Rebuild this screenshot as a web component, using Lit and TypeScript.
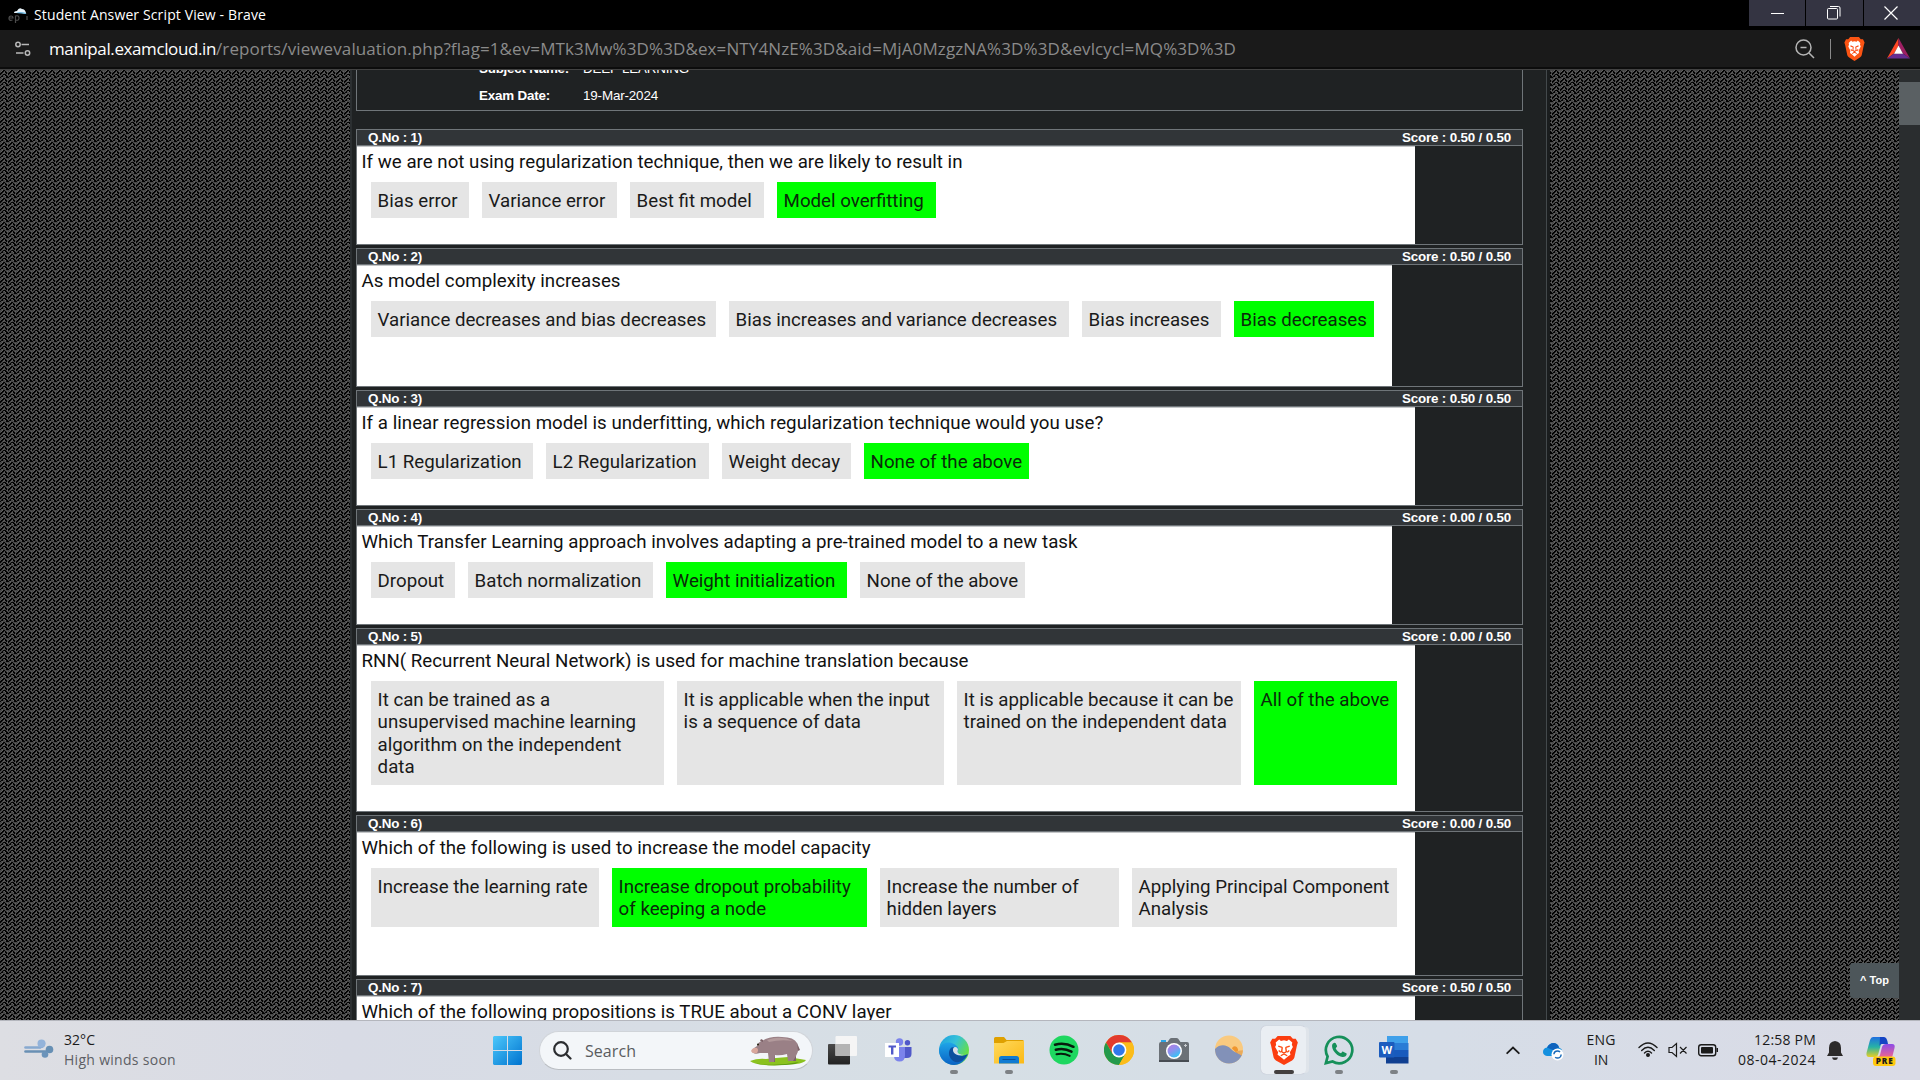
import { LitElement, html, css, svg, nothing } from "lit";
import { customElement, property } from "lit/decorators.js";

// Spreads its letters so that the line takes a given width in pixels.
@customElement("fit-text")
class FitText extends LitElement {
  @property({ type: Number }) w = 0;
  static styles = css`
    :host { display: inline-block; white-space: pre; }
    .t { display: inline-block; }
  `;
  render() { return html`<span class="t"><slot></slot></span>`; }
  firstUpdated() {
    this.fit();
    document.fonts.ready.then(() => this.fit());
  }
  fit() {
    const t = this.renderRoot.querySelector(".t") as HTMLElement;
    t.style.letterSpacing = "0px";
    const n = (this.textContent || "").length;
    const nat = t.getBoundingClientRect().width;
    if (n > 1 && this.w) t.style.letterSpacing = `${(this.w - nat) / n}px`;
  }
}

interface Opt { x: number; r: number; lines: string[]; on?: boolean }
interface Question { n: number; score: string; text: string; tw: number; sheet: number; body: number; opts: Opt[] }

const o = (x: number, r: number, text: string, on = false): Opt => ({ x, r, lines: text.split("|"), on });

const questions: Question[] = [
  { n: 1, score: "0.50", sheet: 1058, body: 98, tw: 601, text: "If we are not using regularization technique, then we are likely to result in",
    opts: [o(371, 469, "Bias error"), o(482, 617, "Variance error"), o(630, 764, "Best fit model"), o(777, 936, "Model overfitting", true)] },
  { n: 2, score: "0.50", sheet: 1035, body: 121, tw: 259, text: "As model complexity increases",
    opts: [o(371, 716, "Variance decreases and bias decreases"), o(729, 1069, "Bias increases and variance decreases"), o(1082, 1221, "Bias increases"), o(1234, 1374, "Bias decreases", true)] },
  { n: 3, score: "0.50", sheet: 1058, body: 98, tw: 741, text: "If a linear regression model is underfitting, which regularization technique would you use?",
    opts: [o(371, 533, "L1 Regularization"), o(546, 709, "L2 Regularization"), o(722, 851, "Weight decay"), o(864, 1029, "None of the above", true)] },
  { n: 4, score: "0.00", sheet: 1035, body: 98, tw: 716, text: "Which Transfer Learning approach involves adapting a pre-trained model to a new task",
    opts: [o(371, 455, "Dropout"), o(468, 653, "Batch normalization"), o(666, 847, "Weight initialization", true), o(860, 1025, "None of the above")] },
  { n: 5, score: "0.00", sheet: 1058, body: 166, tw: 607, text: "RNN( Recurrent Neural Network) is used for machine translation because",
    opts: [o(371, 664, "It can be trained as a|unsupervised machine learning|algorithm on the independent|data"), o(677, 944, "It is applicable when the input|is a sequence of data"), o(957, 1241, "It is applicable because it can be|trained on the independent data"), o(1254, 1397, "All of the above", true)] },
  { n: 6, score: "0.00", sheet: 1058, body: 143, tw: 509, text: "Which of the following is used to increase the model capacity",
    opts: [o(371, 599, "Increase the learning rate"), o(612, 867, "Increase dropout probability|of keeping a node", true), o(880, 1119, "Increase the number of|hidden layers"), o(1132, 1397, "Applying Principal Component|Analysis")] },
  { n: 7, score: "0.50", sheet: 1058, body: 98, tw: 530, text: "Which of the following propositions is TRUE about a CONV layer", opts: [] },
];

// One repeat of the woven page background: g and l are threads, k is the gap.
const weaveRows = ["gglkkggg", "glkkgkgl", "gkkglkkg", "kkglggkg", "kggkkkgl", "ggkglkkg", "gkkgglkk", "kglgggkk"];
const weaveTones: Record<string, string> = { g: "#474747", l: "#606060", k: "#020202" };

const lion = svg`
  <path fill="#fff" d="M13 4.600l2.600.5 1.600-1.200 3 2.600-.4 2 .9 1.800-2.600 4.600.5 2.300-2 1.200-3.600 3-3.600-3-2-1.200.5-2.300-2.600-4.600.9-1.800-.4-2 3-2.600 1.600 1.200z"/>
  <path fill="none" stroke="#fb4a12" stroke-width="1.200" d="M8 9.600l3.400 1.200M18 9.600l-3.400 1.200M11.500 10.500l-.5 4 2 1.200 2-1.200-.5-4M10.200 18l2.800-1.600 2.800 1.600M13 15.600v1.600M8.400 13.400l1.800 1.600M17.600 13.400l-1.800 1.600"/>`;

const icons = {
  edge: svg`<svg width="30" height="30" viewBox="0 0 30 30"><defs>
    <linearGradient id="e1" x1="0" y1="0" x2="1" y2=".6"><stop offset="0" stop-color="#1b9de2"/><stop offset=".5" stop-color="#35c1d8"/><stop offset="1" stop-color="#6be238"/></linearGradient>
    <linearGradient id="e2" x1="0" y1="0" x2="0" y2="1"><stop offset="0" stop-color="#1fa5e8"/><stop offset="1" stop-color="#0a62c4"/></linearGradient></defs>
    <circle cx="15" cy="15" r="15" fill="url(#e1)"/>
    <path fill="url(#e2)" d="M0 15C1 8.500 8 6.500 12.500 8c5.500 1.500 7.500 5 6.500 8-1 2.600 1 5 4.500 5 2 0 4-.8 5-1.400C26.500 26 21 30 15 30 6.700 30 0 23.300 0 15z"/>
    <path fill="#0d4f9e" d="M11.500 13.500c-3 4-1.500 10 3.500 13 4 2.200 9 0 13.500-6.500.5-.8-.2-1-.8-.6-3.700 2-8.700 1.800-11.700-.9-2-1.800-2.200-4.200-1-6-1.500-.6-2.700-.1-3.500 1z"/>
    <path fill="#d7dfe7" d="M19 14.500c-1.400-4-5.500-2.800-5 1 .6 4 6 6 11 4.200C20 20 17.500 18 19 14.500z"/></svg>`,
  explorer: svg`<svg width="30" height="30" viewBox="0 0 30 30"><defs><linearGradient id="f1" x1="0" y1="0" x2="1" y2="1"><stop offset="0" stop-color="#ffd95c"/><stop offset="1" stop-color="#fbb915"/></linearGradient></defs>
    <path fill="#dfa000" d="M0 3.500Q0 2 1.500 2H10l2.500 3H28.500Q30 5 30 6.500V12H0z"/><path fill="url(#f1)" d="M0 8H9.500L13 6H30V28.500H0z"/>
    <path fill="#0f7bd2" d="M5 23.500Q5 21 7.500 21H22.500Q25 21 25 23.500V28.500H5z"/><path stroke="#0a4f99" d="M8.500 24.500H21.500"/></svg>`,
  spotify: svg`<svg width="30" height="30" viewBox="0 0 30 30"><circle cx="15" cy="15" r="14.500" fill="#1ed760"/><path fill="none" stroke="#061a0c" stroke-linecap="round" stroke-width="2.500" d="M6 9.700q9.500-2.600 18.500 2.100M6.800 14.700q8.200-2.200 15.700 1.900"/><path fill="none" stroke="#061a0c" stroke-linecap="round" stroke-width="2" d="M7.500 19.200q7-1.600 13.200 1.700"/></svg>`,
  chrome: svg`<svg width="30" height="30" viewBox="0 0 30 30"><circle cx="15" cy="15" r="15" fill="#fbbc1a"/>
    <path fill="#e23a2e" d="M2 7.500A15 15 0 0 1 28 7.500H15L8.500 18.700z"/><path fill="#23994b" d="M2 7.500A15 15 0 0 0 15 30L21.500 18.700H15L8.500 18.700z"/>
    <path fill="#fbbc1a" d="M28 7.500A15 15 0 0 1 15 30L21.500 18.700 15 7.500z"/><circle cx="15" cy="15" r="7.400" fill="#fff"/><circle cx="15" cy="15" r="5.800" fill="#3178ea"/></svg>`,
  camera: svg`<svg width="30" height="30" viewBox="0 0 30 30"><defs><linearGradient id="c1" x1="0" y1="0" x2=".6" y2="1"><stop offset="0" stop-color="#b97be0"/><stop offset=".5" stop-color="#8e90ee"/><stop offset="1" stop-color="#35c3f5"/></linearGradient></defs>
    <path fill="#2aa5e6" d="M2 5h5v4H2z"/><path fill="#6b7177" d="M0 9Q0 7 2 7H8.500L11 3.500Q11.500 3 12.500 3H17.500Q18.500 3 19 3.500L21.500 7H28Q30 7 30 9V25.500Q30 27 28.500 27H1.500Q0 27 0 25.500z"/><path fill="#474c52" d="M0 25H30V27H0z"/>
    <circle cx="15" cy="16" r="8" fill="#fff"/><circle cx="15" cy="16" r="6.500" fill="url(#c1)"/><path fill="none" stroke="#c8ccd0" d="M26.500 9v3M25 10.500h3"/></svg>`,
  hill: svg`<svg width="30" height="30" viewBox="0 0 30 30"><defs><clipPath id="hc"><circle cx="15" cy="14.500" r="14"/></clipPath></defs><g clip-path="url(#hc)"><path fill="#f9ca80" d="M0 0H30V30H0z"/><path fill="#f0962e" d="M18 13.500c1-3 5-3 6 1v5z"/><path fill="#e9ab5c" d="M22 16l8-1v6l-4 0z"/><path fill="#8291b8" d="M0 15C5 9 12 9 17 14c4 4 7 4 13 8V30H0z"/></g></svg>`,
  brave: svg`<svg width="30" height="30" viewBox="0 0 26 26"><path fill="#fb3d10" d="M7.500 .8H18.500L20.700 3.200 23.200 3.200 25 6.400 24.200 9 22 19.500Q21.600 21 20 22L13 26 6 22Q4.400 21 4 19.500L1.800 9 1 6.400 2.800 3.200 5.300 3.200z"/>${lion}</svg>`,
  whatsapp: svg`<svg width="30" height="30" viewBox="0 0 30 30"><path fill="none" stroke="#16905a" stroke-width="2.700" d="M1.900 28.100L3.600 21.500A13.200 13.200 0 1 1 8.600 26.500z"/><path fill="#16905a" d="M10.500 7.800c-1.800.3-2.700 2-2.400 4 .6 4.700 5.400 9.500 10.300 10.200 2 .3 4.200-.8 4.300-3 0-.4-.2-.6-.5-.8l-3-1.500c-.4-.2-.8-.1-1.100.2l-1.100 1.400c-2.500-.9-4.300-2.700-5.300-5.100l1.200-1.500c.2-.3.3-.6.1-1L11.700 8.300c-.2-.4-.6-.6-1.200-.5z"/></svg>`,
  word: svg`<svg width="30" height="30" viewBox="0 0 30 30"><path fill="#3fa0ea" d="M8 1H29V8H8z"/><path fill="#2a7cd6" d="M7 8H29.500V15H7z"/><path fill="#185abd" d="M7 15H29.500V22H7z"/><path fill="#103f91" d="M7 22H29.500V28.500H7z"/><rect y="7" width="15.500" height="15.500" rx="1" fill="#1b5cbe"/><text x="7.700" y="18.800" font-size="11" font-weight="700" text-anchor="middle" fill="#fff">W</text></svg>`,
};

const apps: Array<[keyof typeof icons, number]> = [
  ["edge", 1], ["explorer", 1], ["spotify", 0], ["chrome", 0], ["camera", 0], ["hill", 0], ["brave", 2], ["whatsapp", 1], ["word", 1],
];

@customElement("app-root")
class AppRoot extends LitElement {
  static styles = css`
    :host { display: block; width: 1920px; height: 1080px; overflow: hidden; background: #000; --ui: "Open Sans", "Noto Sans", sans-serif; }
    * { box-sizing: border-box; }
    svg { display: block; flex: none; }
    .screen { display: grid; grid-template-rows: 30px 40px 950px 60px; width: 1920px; height: 1080px; font-family: var(--ui); }
    .title { display: flex; align-items: flex-start; background: #000; color: #fff; font-size: 14px; line-height: 29px; }
    .fav { margin: 7px 6px 0 8px; }
    .grow { flex: 1; }
    .btns { display: flex; gap: 1px; }
    .btn { width: 57px; height: 26px; background: #343442; display: flex; align-items: center; justify-content: center; }
    .btn:first-child { width: 56px; padding-left: 2px; }
    .btn:last-child { width: 56px; padding-right: 2px; }
    .btn:nth-child(2) { padding-right: 2px; }
    .url { display: flex; height: 40px; background: #1a1a1a; border-bottom: 1px solid #424242; box-shadow: inset 0 -2px 0 #0c0c0c; align-items: center; font-size: 17px; color: #8b8b8b; padding: 0 10px 2px 15px; }
    .url .tune { margin-right: 18px; }
    .url b { font-weight: 400; color: #fff; }
    .sep { width: 1px; height: 20px; background: #8a8a8a; margin: 0 13px 0 15px; }
    .bat { margin-left: 22px; }
    .page { position: relative; display: flex; height: 950px; overflow: hidden; background: #1f2223; }
    .weave { height: 950px; }
    .wrap { width: 1200px; border-left: 2px solid #2b2f31; border-right: 3px solid #1a1d1e; padding: 0 24px 0 4px; font-family: "Liberation Sans", Arial, sans-serif; font-weight: 700; font-size: 13.400px; color: #fff; box-shadow: inset -1px 0 0 #43494c; }
    .info { height: 41px; border: 1px solid #6f7579; border-top: 0; margin-bottom: 18px; padding-left: 122px; overflow: hidden; }
    .row { display: grid; grid-template-columns: 104px 1fr; line-height: 27px; height: 27px; }
    .row:first-child { margin-top: -15px; }
    .row span:last-child { font-weight: 400; }
    .q { border: 1px solid #6f7579; margin-bottom: 3px; }
    .qh { display: flex; justify-content: space-between; height: 16px; line-height: 15px; background: #313538; border-bottom: 1px solid #6f7579; padding: 0 11px; }
    .sheet { background: #fff; font-family: Roboto, sans-serif; font-weight: 400; font-size: 18.700px; color: #111; overflow: hidden; border-top: 1px solid #c4c6c8; }
    .qt { height: 35px; line-height: 31px; padding-left: 4.500px; white-space: nowrap; }
    .opts { display: flex; gap: 13px; padding-left: 14px; align-items: stretch; }
    .opt { background: #e5e5e5; padding: 7.500px 0 6.200px 6.600px; line-height: 22.500px; white-space: nowrap; color: #1a1a1a; }
    .opt.on { background: #0f0; color: #0a2a0a; }
    .line { display: block; }
    .scroll { width: 21px; background: #2a2d2f; padding-top: 12px; }
    .thumb { height: 43px; background: #5a6063; }
    .top { position: absolute; left: 1850px; top: 893px; width: 49px; height: 35px; background: #4d565a; border-radius: 3px 0 0 3px; color: #fff; font: 700 11px/35px "Liberation Sans", sans-serif; text-align: center; }
    .task { display: flex; height: 60px; border-top: 1px solid #b4b6bd; background: linear-gradient(90deg, #dddee3, #d8dbe5 18%, #d6dfe5 50%, #d6dde7 75%, #dadbe6); color: #1b1b1b; }
    .weather { width: 493px; display: flex; padding: 17px 0 0 24px; }
    .two { font-size: 14px; line-height: 20px; margin-top: -8px; display: flex; flex-direction: column; }
    .weather .two { margin-left: 10px; }
    .dim { color: #5d5f65; }
    .win { margin: 15px 17px 0 0; }
    .search { width: 274px; height: 39px; margin: 10px 15px 0 0; border-radius: 20px; background: #f3f6f9; border: 1px solid #d0d4d9; border-bottom-color: #b9bdc2; display: flex; align-items: center; padding: 0 6px 0 13px; font-size: 16px; color: #5a5c5f; }
    .search fit-text { margin-left: 13px; flex: 1; }
    .tv { margin: 15px 27px 0 0; }
    .teams { margin: 17px 14px 0 0; }
    .apps { display: flex; }
    .app { width: 45px; height: 48px; margin: 5px 5px 0; padding-top: 9px; display: flex; flex-direction: column; align-items: center; gap: 5px; }
    .app.active { background: #eaeef3; border-radius: 5px; box-shadow: 4px 0 0 -1px #dfe4ea, 0 0 1px #aab; }
    .ind { width: 8px; height: 4px; border-radius: 2px; background: #7d8185; }
    .active .ind { width: 20px; background: #433f3f; }
    .chev { margin: 25px 23px 0 0; }
    .cloud { margin: 21px 22px 0 0; }
    .lang { align-items: center; margin: 1px 22px 0 0; width: 30px; padding-top: 8px; }
    .clock { align-items: flex-end; margin: 1px 11px 0 8px; width: 79px; padding-top: 8px; }
    .st { margin: 19px 10px 0 0; }
    .bell { margin: 20px 23px 0 0; }
    .copilot { margin: 16px 24px 0 0; }
  `;

  private weave(w: number, ox: number, id: string) {
    return html`<svg class="weave" width=${w} height="950"><defs><pattern id=${id} x=${ox} width="8" height="8" patternUnits="userSpaceOnUse" shape-rendering="crispEdges">
      ${weaveRows.flatMap((row, y) => [...row].map((c, x) => svg`<rect x=${x} y=${y} width="1" height="1" fill=${weaveTones[c]}/>`))}</pattern></defs>
      <rect width="100%" height="100%" fill="url(#${id})"/></svg>`;
  }

  private question(q: Question) {
    return html`<section class="q">
      <div class="qh"><fit-text w="54">Q.No : ${q.n})</fit-text><fit-text w="109">Score : ${q.score} / 0.50</fit-text></div>
      <div class="sheet" style="width:${q.sheet}px;height:${q.body}px">
        <div class="qt"><fit-text w=${q.tw}>${q.text}</fit-text></div>
        <div class="opts">${q.opts.map((p) => html`<div class="opt ${p.on ? "on" : ""}" style="width:${p.r - p.x}px">${p.lines.map((l) => html`<span class="line">${l}</span>`)}</div>`)}</div>
      </div></section>`;
  }

  render() {
    return html`<div class="screen">
      <header class="title">
        <svg class="fav" width="20" height="17" viewBox="0 0 20 17"><path fill="#e9f4fb" d="M6 6q0-2 3-2 2-4 5-2 3 0 4 4 1 1-1 1l-3-1-4 0z"/><path fill="#6cb5de" d="M8 6q4-2 10 0v1z"/><g fill="none" stroke="#4c4c4c" stroke-width="1.200"><path d="M1 11h4q0-2-2-2t-2 2.500 3.500 1.500M7.500 16V9q3.500-1 3.500 2t-3.500 2M19 9v4"/></g></svg>
        <fit-text w="232">Student Answer Script View - Brave</fit-text>
        <span class="grow"></span>
        <div class="btns">
          <div class="btn"><svg width="14" height="14"><path stroke="#fff" d="M0 7.500h13"/></svg></div>
          <div class="btn"><svg width="14" height="14" fill="none" stroke="#fff"><rect x=".5" y="2.500" width="10" height="10.500" rx="1"/><path d="M3 .5h8.500q1.500 0 1.500 1.500v8.500"/></svg></div>
          <div class="btn"><svg width="14" height="14" stroke="#fff" stroke-width="1.200"><path d="M.5 .5l13 13M13.500 .5l-13 13"/></svg></div>
        </div>
      </header>
      <div class="url">
        <svg class="tune" width="16" height="16" fill="none" stroke="#b9b9b9" stroke-width="1.500"><circle cx="3" cy="3.500" r="2.200"/><path d="M6.500 3.500H14M1 12H8.500"/><circle cx="12.500" cy="12" r="2.200"/></svg>
        <fit-text w="167"><b>manipal.examcloud.in</b></fit-text><fit-text w="1020">/reports/viewevaluation.php?flag=1&amp;ev=MTk3Mw%3D%3D&amp;ex=NTY4NzE%3D&amp;aid=MjA0MzgzNA%3D%3D&amp;evlcycl=MQ%3D%3D</fit-text>
        <span class="grow"></span>
        <svg width="20" height="20" fill="none" stroke="#b5b5b5" stroke-width="1.500"><circle cx="8.500" cy="8.500" r="7.500"/><path d="M14 14l5 5M5.500 8.500h6"/></svg>
        <span class="sep"></span>
        <svg width="21" height="24" viewBox="0 0 26 26" preserveAspectRatio="none"><path fill="#fb5413" d="M7.500 0H18.500L20.700 2.500 23.500 2.500 25.500 6 24.500 9 22 19.500Q21.600 21 20 22L13 26 6 22Q4.400 21 4 19.500L1.500 9 .5 6 2.500 2.500 5.300 2.500z"/>${lion}</svg>
        <svg class="bat" width="23" height="21" viewBox="0 0 23 21"><path fill="#ff4724" d="M11.500 0v8L7 15.500 0 20.500z"/><path fill="#9e1f63" d="M11.500 0v8L16 15.500 23 20.500z"/><path fill="#662d91" d="M0 20.500L7 15.500h9l7 5z"/><path fill="#fff" d="M11.500 7.500L16 15.800H7z"/></svg>
      </div>
      <main class="page">
        ${this.weave(350, 0, "wl")}
        <div class="wrap">
          <div class="info">
            <div class="row"><span><fit-text w="90">Subject Name:</fit-text></span><span><fit-text w="106">DEEP LEARNING</fit-text></span></div>
            <div class="row"><span><fit-text w="71">Exam Date:</fit-text></span><span><fit-text w="75">19-Mar-2024</fit-text></span></div>
          </div>
          ${questions.map((q) => this.question(q))}
        </div>
        ${this.weave(349, 2, "wr")}
        <div class="scroll"><div class="thumb"></div></div>
        <div class="top">^ Top</div>
      </main>
      <footer class="task">
        <div class="weather">
          <svg width="30" height="22" viewBox="0 0 30 22" fill="none" stroke-linecap="round"><g stroke="#87a9d0" stroke-width="2.600"><path d="M1.500 9.500H16"/><path d="M16 9q4 0 4-4" /></g><circle cx="17.500" cy="5.500" r="4" fill="#93b3da"/><path stroke="#6990b4" stroke-width="2.600" d="M1.500 13.500H22"/><circle cx="25.500" cy="11.500" r="3.800" fill="#668fb4"/><circle cx="21" cy="16.500" r="3.300" fill="#6a93ba"/></svg>
          <div class="two"><fit-text w="31">32°C</fit-text><fit-text class="dim" w="112">High winds soon</fit-text></div>
        </div>
        <svg class="win" width="29" height="29" viewBox="0 0 29 29"><defs><linearGradient id="w1" x1="0" y1="0" x2="1" y2="1"><stop offset="0" stop-color="#4cc8fb"/><stop offset="1" stop-color="#0073cf"/></linearGradient></defs><path fill="url(#w1)" d="M1 0H14V14H0V1zM15 0H28L29 1V14H15zM0 15H14V29H1L0 28zM15 15H29V28L28 29H15z"/></svg>
        <div class="search">
          <svg width="19" height="19" fill="none" stroke="#2b2d30" stroke-width="2.200"><circle cx="8" cy="8" r="6.800"/><path stroke-linecap="round" d="M13 13l4.500 4.500"/></svg>
          <fit-text w="51">Search</fit-text>
          <svg width="56" height="30" viewBox="0 0 56 30"><path fill="#8bc21f" d="M0 25q8-3 16-2l10-1 12-1 18 3q-2 3-10 4l-22 1.500q-18 0-24-4.500z"/><path fill="#5d9a12" d="M4 27q20 4 45-1l-4 2q-24 3-41-1z"/><path fill="#7c6167" d="M20 16h5v10h-5zM41 14h5v11h-4z"/><path fill="#9a8086" d="M12 5Q20 0 32 1q12 0 15 6 3 7-1 13l-3 5h-5l-1-7q-7 2-12 1l-1 7h-5l-1-9q-6 0-8 0-7 2-8-2 1-3 5-5 1-4 5-5z"/><path fill="#b39a9c" d="M17 4q14-5 26 1-12-2-24 1z"/><path fill="#d9a79c" d="M1 15q2-4 6-3 2 2 0 5-5 1-6-2z"/><circle cx="8" cy="8.500" r="1" fill="#221"/><path fill="#7c6167" d="M10 5l1-2 2 1v2zM47 7l3 7-2 1z"/></svg>
        </div>
        <svg class="tv" width="30" height="30"><defs><linearGradient id="t1" x1="0" y1="0" x2="0" y2="1"><stop offset="0" stop-color="#4a4a4a"/><stop offset="1" stop-color="#222"/></linearGradient></defs><rect y="8" width="22" height="20.500" rx="1" fill="url(#t1)"/><rect x="7.500" y="0" width="21.500" height="20" rx="1" fill="#f5f5f5"/><path fill="#b4b4b4" d="M7.500 8H22V20H7.500z"/></svg>
        <svg class="teams" width="27" height="25" viewBox="0 0 27 25"><circle cx="14.500" cy="4" r="3.700" fill="#7b83eb"/><circle cx="22.500" cy="4.800" r="2.700" fill="#5059c9"/><path fill="#5059c9" d="M18 9h8.500v7q0 4-4.500 4h-3z"/><path fill="#7b83eb" d="M9 9h11v8.500q0 6-5.500 6-5 0-5.500-5z"/><rect y="5" width="14" height="14" fill="#fff"/><path fill="#5059c9" d="M3.500 7.500h7.500v2H8.400v7H6v-7H3.500z"/></svg>
        <div class="apps">${apps.map(([k, s]) => html`<div class="app ${s === 2 ? "active" : ""}">${icons[k]}${s ? html`<span class="ind"></span>` : nothing}</div>`)}</div>
        <span class="grow"></span>
        <svg class="chev" width="14" height="9" fill="none" stroke="#1b1b1b" stroke-width="1.800" stroke-linecap="round"><path d="M1.200 7.200L7 1.500l5.800 5.700"/></svg>
        <svg class="cloud" width="21" height="19" viewBox="0 0 21 19"><path fill="#1490df" d="M4 14q-4-1-4-4 0-4 4-4.500Q6 1 11 1q4 .5 5 4.500 3 1 3.500 4L12 14z"/><path fill="#0f63bd" d="M4 5.500Q7 .5 11 1q4 .5 5 4.500l-5 3z"/><circle cx="14.500" cy="12.500" r="6" fill="#fff"/><circle cx="14.500" cy="12.500" r="3.600" fill="none" stroke="#1467b8" stroke-width="1.500" stroke-dasharray="8 3.300"/></svg>
        <div class="two lang"><fit-text w="29">ENG</fit-text><fit-text w="14">IN</fit-text></div>
        <svg class="st" width="20" height="18" viewBox="0 0 20 18" fill="none" stroke="#1b1b1b" stroke-width="1.400" stroke-linecap="round"><path d="M1 7.500q9-9 18 0M3.700 10.500q6.300-6.300 12.600 0M6.500 13q3.500-3.300 7 0"/><circle cx="10" cy="15" r="1.300" fill="#1b1b1b"/></svg>
        <svg class="st" width="20" height="18" viewBox="0 0 20 18" fill="none" stroke="#1b1b1b" stroke-width="1.200"><path d="M1 7.500h3L8.500 3.500v13L4 12.500H1zM12 7l6.500 6.500M18.500 7L12 13.500"/></svg>
        <svg class="st" width="21" height="18" viewBox="0 0 21 18"><rect x=".7" y="4.700" width="17" height="11" rx="2.500" fill="none" stroke="#1b1b1b" stroke-width="1.400"/><rect x="3" y="7" width="12" height="6.500" rx="1" fill="#1b1b1b"/><path fill="#1b1b1b" d="M18.500 8h1.500v4h-1.500z"/></svg>
        <div class="two clock"><fit-text w="62">12:58 PM</fit-text><fit-text w="78">08-04-2024</fit-text></div>
        <svg class="bell" width="16" height="20" viewBox="0 0 16 20"><path fill="#2d2b2b" d="M8 0q6 .5 6 7v4.500l2 3.500H0l2-3.500V7Q2 .5 8 0zM5 16.500h6q-.5 2.500-3 2.500t-3-2.500z"/></svg>
        <svg class="copilot" width="30" height="29" viewBox="0 0 30 29"><defs><linearGradient id="p1" x1="0" y1="0" x2="0" y2="1"><stop offset="0" stop-color="#1f6fe0"/><stop offset=".5" stop-color="#27b3a5"/><stop offset="1" stop-color="#e8cf25"/></linearGradient><linearGradient id="p2" x1="0" y1="0" x2="0" y2="1"><stop offset="0" stop-color="#8c4be8"/><stop offset="1" stop-color="#f2688c"/></linearGradient></defs>
          <path fill="url(#p1)" d="M7 0H17L12 18q-1 2-3 2H3Q0 20 .5 16L4 3Q5 0 7 0z"/><path fill="#1544c4" d="M14 0h4q3 0 4 7h-6q-2 0-2.500 2z"/><path fill="url(#p2)" d="M20 7h6q3.500 0 2.500 4l-2 8q-1 2-3 2H11q2-.5 3-3l2-8q1-3 4-3z"/><rect x="7" y="19.500" width="22.500" height="9.500" rx="3" fill="#ffc90e"/><text x="18.200" y="27.300" font-size="8.200" font-weight="800" text-anchor="middle" textLength="17" fill="#1b1b1b">PRE</text></svg>
      </footer>
    </div>`;
  }
}
